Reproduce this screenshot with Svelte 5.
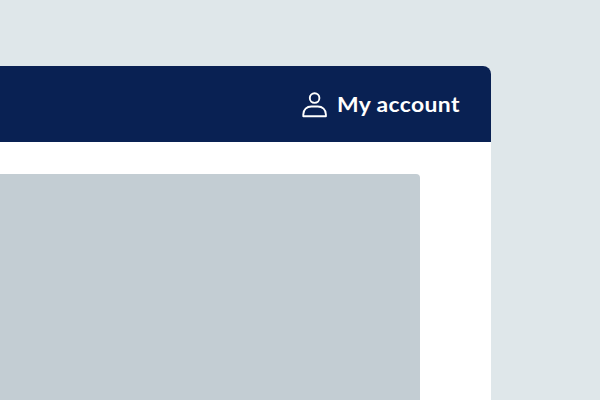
<script>
  const label = 'My account';
</script>

<main class="page">
  <section class="window">
    <header class="bar">
      <a class="account" href="#account">
        <svg class="icon" width="26" height="28" viewBox="0 0 26 28" aria-hidden="true">
          <circle cx="12.6" cy="7.1" r="4.8" />
          <path d="M1.3 25.2V23.4C1.3 18.6 4.8 15.5 9.4 15.5H15.8C20.4 15.5 23.9 18.6 23.9 23.4V25.2Z" />
        </svg>
        <span class="label">{label}</span>
      </a>
    </header>
    <div class="body">
      <div class="placeholder"></div>
    </div>
  </section>
</main>

<style>
  :global(body) {
    margin: 0;
    background: #dfe7ea;
  }
  .page {
    box-sizing: border-box;
    width: 600px;
    height: 400px;
    padding: 66px 108.6px 0 0;
    background: #dfe7ea;
    overflow: hidden;
    display: flex;
  }
  .window {
    flex: 1;
    display: flex;
    flex-direction: column;
    border-radius: 0 8px 0 0;
    overflow: hidden;
    background: #fff;
  }
  .bar {
    box-sizing: border-box;
    height: 76px;
    flex: none;
    padding: 25px 30.4px 0 0;
    display: flex;
    justify-content: flex-end;
    background: #092153;
  }
  .account {
    display: flex;
    width: 159px;
    height: 28px;
    gap: 8.5px;
    color: #fff;
    text-decoration: none;
  }
  .icon {
    flex: none;
    fill: none;
    stroke: #fff;
    stroke-width: 1.9;
    stroke-linejoin: round;
  }
  .label {
    font: 700 21px/26px Lato, 'Open Sans', sans-serif;
    letter-spacing: 0.35px;
    white-space: nowrap;
    transform: scaleX(1.09);
    transform-origin: 0 50%;
  }
  .body {
    flex: 1;
    display: flex;
    padding: 32px 71px 0 0;
  }
  .placeholder {
    flex: 1;
    border-radius: 0 4px 0 0;
    background: #c3cdd3;
  }
</style>
